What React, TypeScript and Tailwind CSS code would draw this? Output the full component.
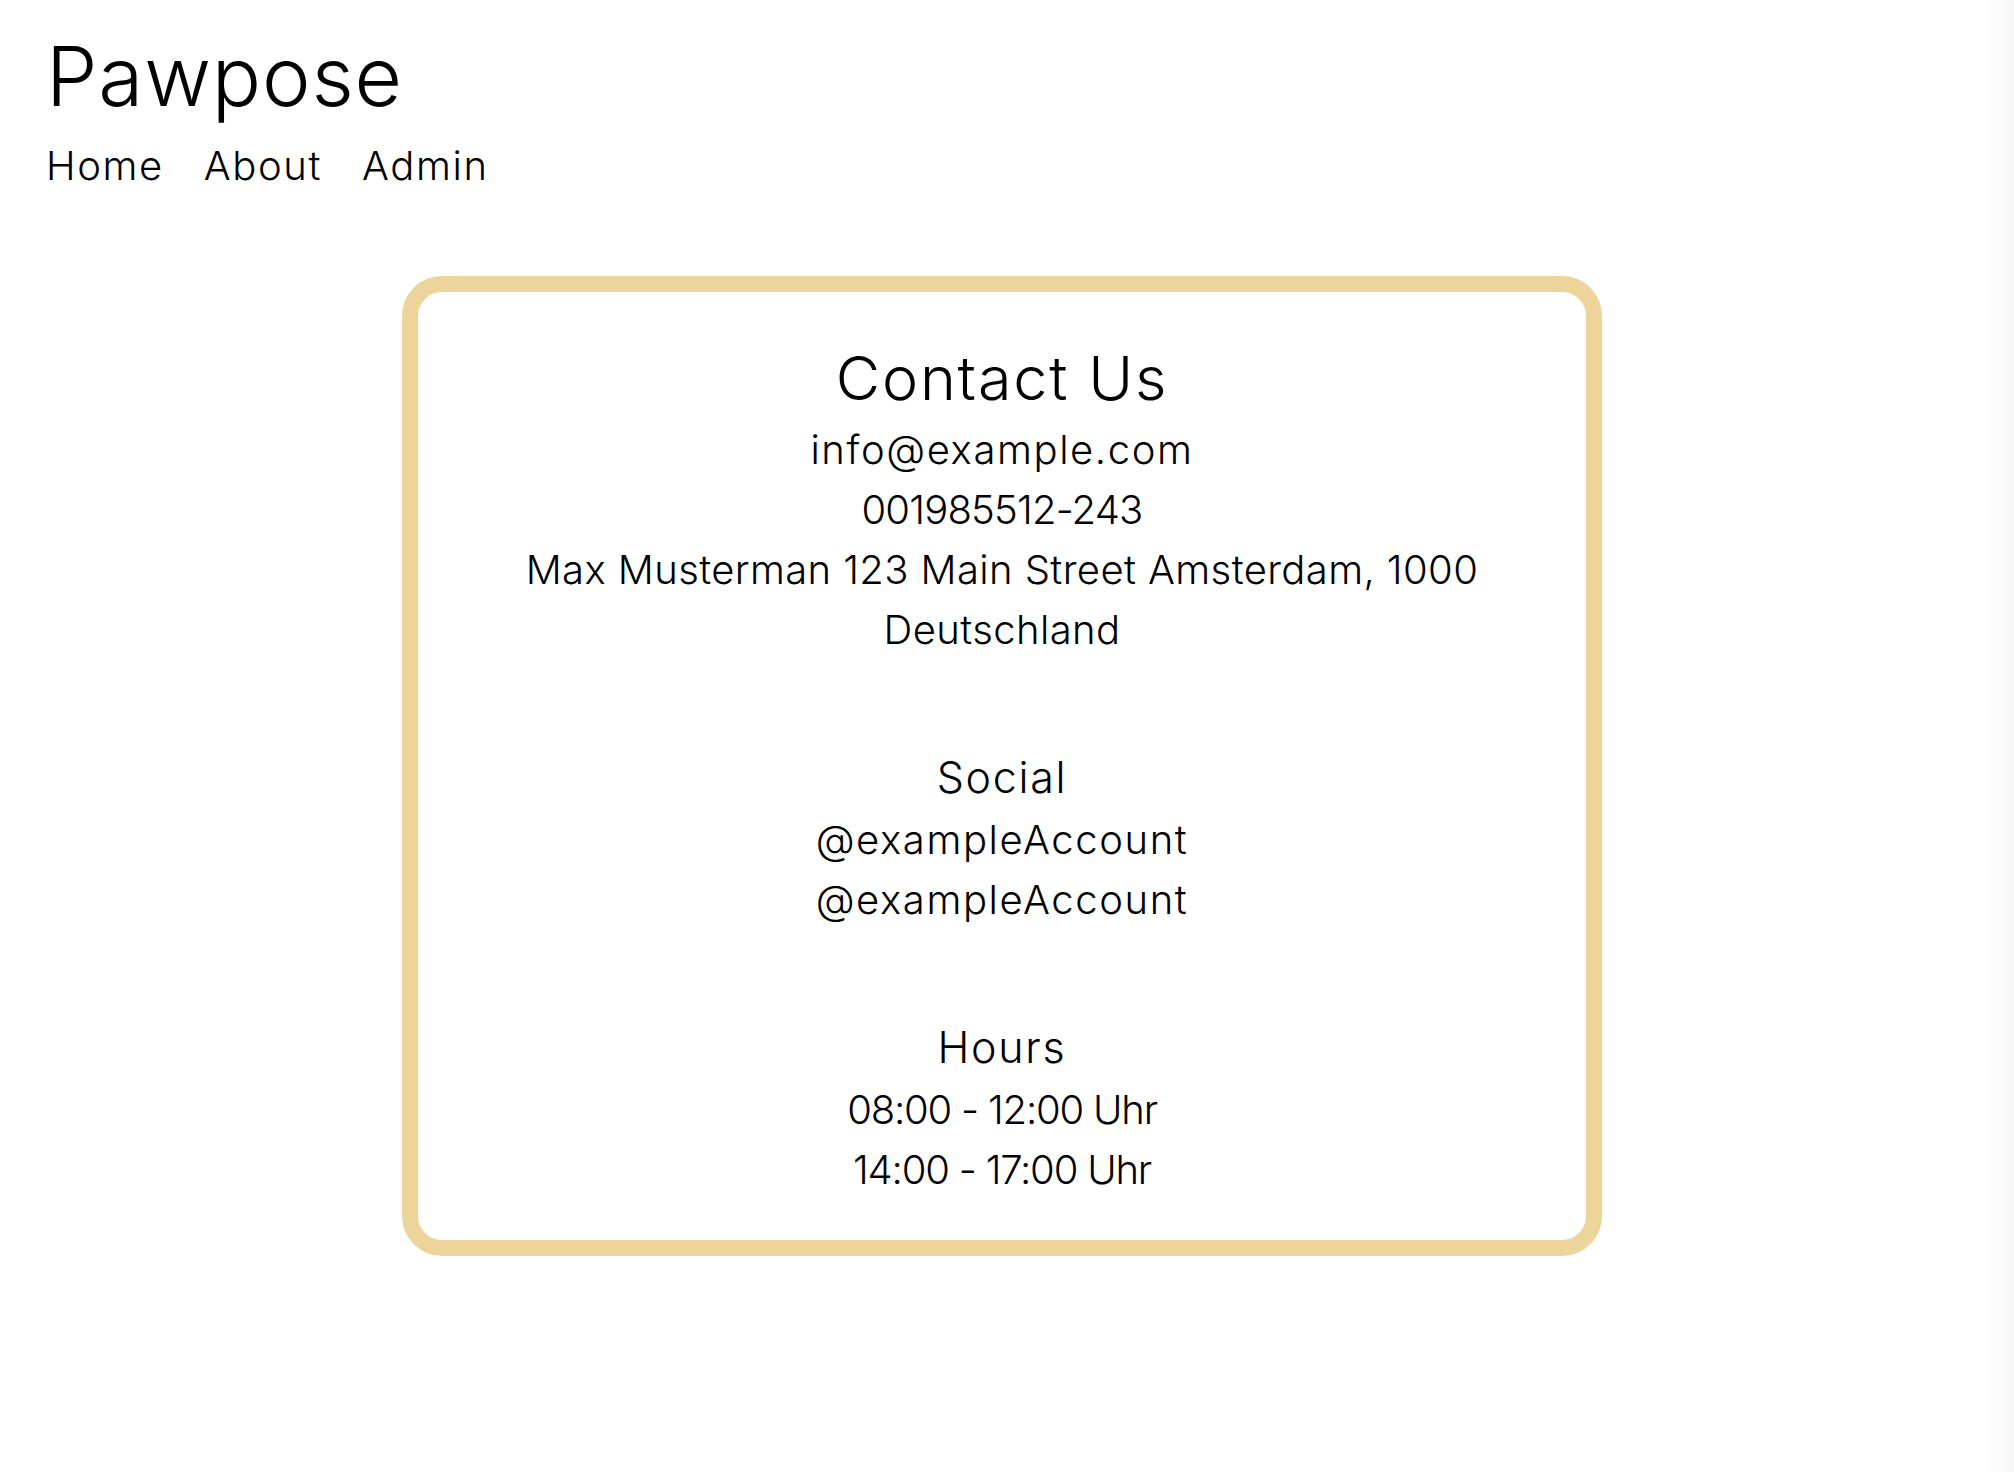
import React from 'react';

const font = { fontFamily: 'Inter, "Open Sans", sans-serif' };

type Row = { text: string; track?: string };

const contact: Row[] = [
    { text: 'info@example.com' },
    { text: '001985512-243', track: 'tracking-[-0.02em]' },
    { text: 'Max Musterman 123 Main Street Amsterdam, 1000', track: 'tracking-[0.01em]' },
    { text: 'Deutschland', track: 'tracking-[0.01em]' },
];

const socials: Row[] = [{ text: '@exampleAccount' }, { text: '@exampleAccount' }];
const hours: Row[] = [
    { text: '08:00 - 12:00 Uhr', track: 'tracking-[-0.03em]' },
    { text: '14:00 - 17:00 Uhr', track: 'tracking-[-0.03em]' },
];

const Line = ({ row }: { row: Row }) => (
    <p className={`text-[40px] leading-[60px] ${row.track ?? 'tracking-[0.04em]'}`}>{row.text}</p>
);

const Section = ({ title, lines }: { title: string; lines: Row[] }) => (
    <section className="mt-[96px] flex flex-col items-center">
        <h3 className="text-[43px] leading-none font-light tracking-[0.04em]">{title}</h3>
        <div className="mt-[11px]">
            {lines.map((l, i) => <Line key={i} row={l} />)}
        </div>
    </section>
);

export default function App() {
    return (
        <div className="min-h-[1472px] bg-white text-black font-light relative" style={font}>
            <header className="pl-[46px] pt-[36px]">
                <h1 className="text-[82px] leading-none font-light tracking-[0.01em]">Pawpose</h1>
                <nav className="mt-[28px] flex gap-[40px] text-[40px] leading-none tracking-[0.04em]">
                    <a href="#">Home</a>
                    <a href="#">About</a>
                    <a href="#">Admin</a>
                </nav>
            </header>

            <main className="pr-[10px] mt-[90px] flex justify-center">
                <div className="w-[1200px] border-[16px] border-[#edd49a] rounded-[40px] pt-[56px] pb-[40px] flex flex-col items-center text-center">
                    <h2 className="text-[61px] leading-none font-light tracking-[0.03em]">Contact Us</h2>
                    <div className="mt-[11px]">
                        {contact.map((r, i) => <Line key={i} row={r} />)}
                    </div>
                    <Section title="Social" lines={socials} />
                    <Section title="Hours" lines={hours} />
                </div>
            </main>

            <div className="fixed top-0 right-0 h-full w-[31px] bg-gradient-to-r from-white via-[#fcfcfc] to-[#f6f6f6]" />
        </div>
    );
}
